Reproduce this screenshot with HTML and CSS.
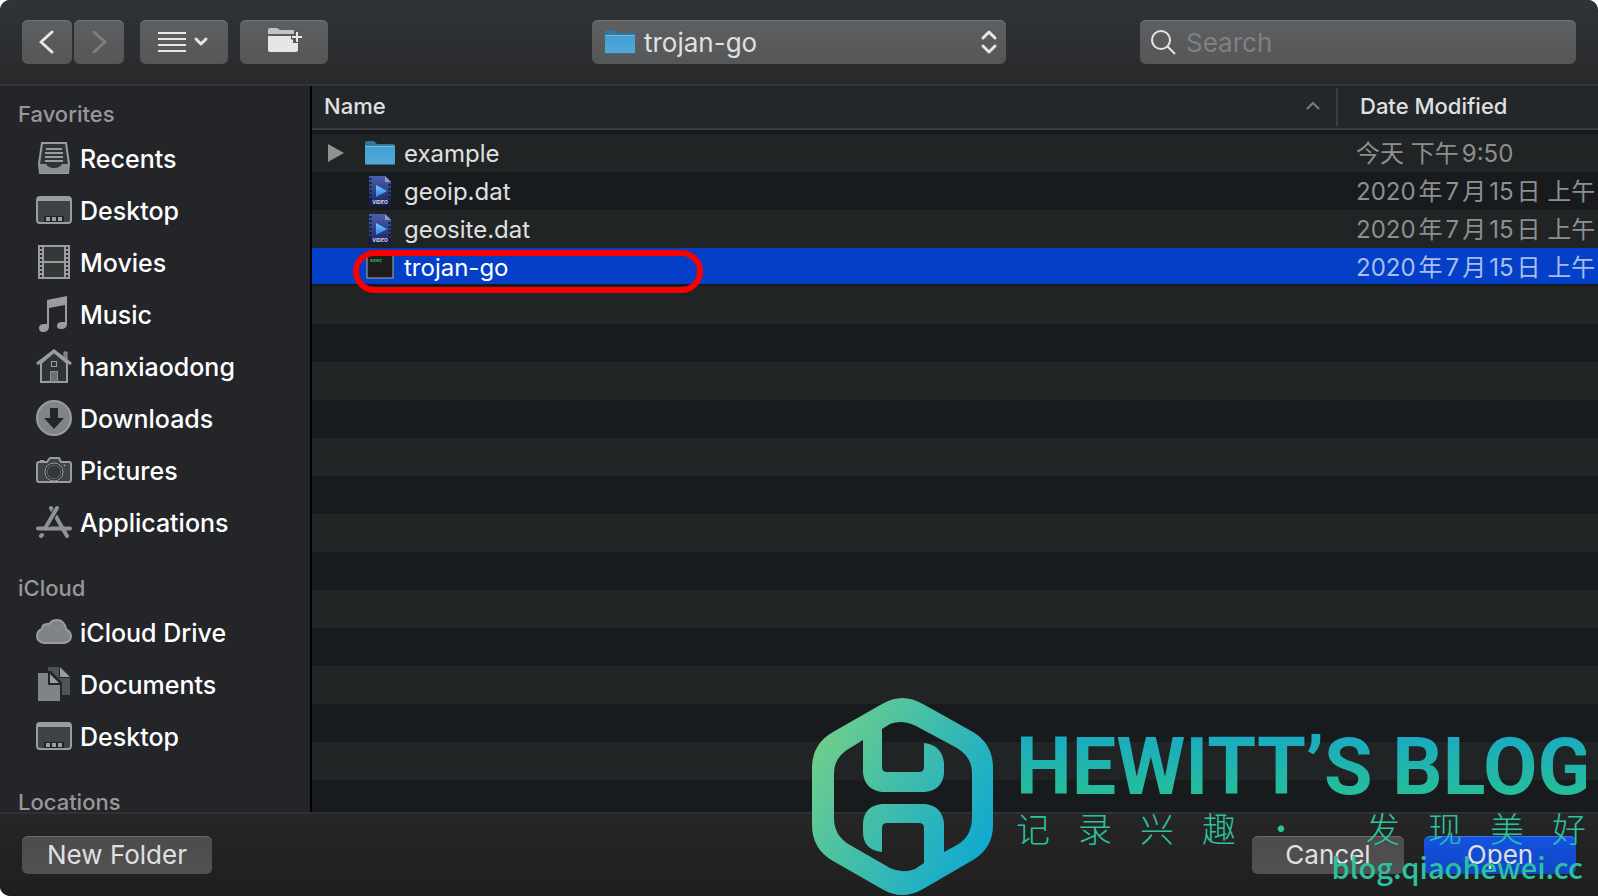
FILE: index.html
```
<!DOCTYPE html>
<html lang="en">
<head>
  <meta charset="UTF-8">
  <meta name="viewport" content="width=device-width, initial-scale=1.0">
  <title>Open</title>
  <link rel="stylesheet" href="styles.css">
</head>
<body>

  <!-- shared icons -->
  <svg class="defs" width="0" height="0" aria-hidden="true">
    <defs>
      <linearGradient id="folderFill" x1="0" y1="0" x2="0" y2="1">
        <stop offset="0" stop-color="#3f9fd3"/>
        <stop offset="1" stop-color="#55a9d6"/>
      </linearGradient>
      <linearGradient id="videoFill" x1="0" y1="0" x2="0" y2="1">
        <stop offset="0" stop-color="#4a5fb0"/>
        <stop offset="1" stop-color="#1b2358"/>
      </linearGradient>
      <linearGradient id="playFill" x1="0" y1="0" x2="0" y2="1">
        <stop offset="0" stop-color="#7cc4ff"/>
        <stop offset="1" stop-color="#2b83f2"/>
      </linearGradient>
      <linearGradient id="logoFill" gradientUnits="userSpaceOnUse" x1="0" y1="50" x2="181" y2="147">
        <stop offset="0" stop-color="#6fcf8a"/>
        <stop offset="0.5" stop-color="#3dbbae"/>
        <stop offset="1" stop-color="#0fa8d2"/>
      </linearGradient>
    </defs>
    <symbol id="folder" viewBox="0 0 30 25">
      <path d="M0 4V2Q0 0 2 0H8Q9 0 10 1L12 3H28Q30 3 30 5V10H0Z" fill="#33779d"/>
      <path d="M0 5H30V22Q30 24 28 24H2Q0 24 0 22Z" fill="url(#folderFill)"/>
      <path d="M0 5.5H30" stroke="#73bde2"/>
      <path d="M0.5 23.5H29.5" stroke="#2c6f96"/>
    </symbol>
    <symbol id="video" viewBox="0 0 24 30">
      <path d="M1 0H17L23 6V30H1Z" fill="url(#videoFill)"/>
      <path d="M17 0L23 6H17Z" fill="#8b9ad2"/>
      <path d="M2.5 2V24M21.500 8V24" stroke="#10183f" stroke-width="2" stroke-dasharray="2 2"/>
      <path d="M8 9L19 15L8 21Z" fill="url(#playFill)"/>
      <rect x="1" y="24" width="22" height="6" fill="#161d4a"/>
      <text x="12" y="28" class="video-label">VIDEO</text>
    </symbol>
    <symbol id="desktop" viewBox="0 0 36 36">
      <rect x="1" y="5" width="34" height="26" rx="3" fill="#3e4346" stroke="#9b9ca0" stroke-width="2"/>
      <path d="M1 9V7Q1 5 3 5H33Q35 5 35 7V9Z" fill="#9b9ca0"/>
      <rect x="8" y="24" width="20" height="6" fill="#222327"/>
      <path d="M10 25h4v4h-4zM16 25h4v4h-4zM22 25h4v4h-4z" fill="#9b9ca0"/>
    </symbol>
  </svg>

  <div class="dialog">
    <header class="toolbar">
      <div class="tools">
        <div class="nav-btns">
          <button type="button" class="btn-tool nav" aria-label="Back">
            <svg width="16" height="24" viewBox="0 0 16 24"><path d="M13 2L2 12L13 22" class="line"/></svg>
          </button>
          <button type="button" class="btn-tool nav" aria-label="Forward" disabled>
            <svg width="16" height="24" viewBox="0 0 16 24"><path d="M3 2L14 12L3 22" class="line"/></svg>
          </button>
        </div>
        <button type="button" class="btn-tool" aria-label="View options">
          <svg width="52" height="22" viewBox="0 0 52 22">
            <path d="M0 2H28M0 8H28M0 14H28M0 20H28" stroke="#e6e6e7" stroke-width="2"/>
            <path d="M38 8L43 13L48 8" class="line"/>
          </svg>
        </button>
        <button type="button" class="btn-tool" aria-label="Create folder">
          <svg width="36" height="30" viewBox="0 0 36 30">
            <path d="M2 7V3Q2 1 4 1H11L14 3H28V7Z" fill="#c3c4c5"/>
            <path d="M2 9H25V12H27V16H32V23Q32 25 30 25H4Q2 25 2 23Z" fill="#e6e6e7"/>
            <path d="M31 4V16M25 10H36" stroke="#57585a" stroke-width="5"/>
            <path d="M31 5V15M26 10H36" stroke="#e6e6e7" stroke-width="2"/>
          </svg>
        </button>
      </div>
      <div class="path-box">
        <svg class="path-folder" width="30" height="25"><use href="#folder"/></svg>
        <select class="path-select" aria-label="Folder">
          <option>trojan-go</option>
        </select>
        <svg class="path-arrows" width="18" height="26" viewBox="0 0 18 26">
          <path d="M3 9L9 3L15 9M3 17L9 23L15 17" class="line"/>
        </svg>
      </div>
      <div class="search-box">
        <svg class="search-icon" width="26" height="26" viewBox="0 0 26 26">
          <circle cx="11" cy="11" r="9" fill="none" stroke="#e6e6e7" stroke-width="2"/>
          <path d="M17 17L25 25" stroke="#e6e6e7" stroke-width="2"/>
        </svg>
        <input type="search" class="search-input" placeholder="Search" aria-label="Search">
      </div>
    </header>

    <div class="content">
      <nav class="sidebar">
        <h2 class="side-title">Favorites</h2>
        <ul class="side-list">
          <li><a href="#">
            <svg viewBox="0 0 36 36">
              <path d="M7 3H29L33 24V33H3V24Z" fill="#2f3437"/>
              <path d="M3 24L6 3H30L33 24L32 33H4Z" fill="none" stroke="#9b9ca0" stroke-width="2"/>
              <path d="M3 24H10Q12 28 18 28T26 24H33L32 33H4Z" fill="#8b8f92"/>
              <path d="M10 9H26M9 13H27M9 17H27M9 21H27" stroke="#9b9ca0" stroke-width="2"/>
            </svg><span>Recents</span></a></li>
          <li><a href="#"><svg><use href="#desktop"/></svg><span>Desktop</span></a></li>
          <li><a href="#">
            <svg viewBox="0 0 36 36">
              <rect x="2" y="1" width="32" height="34" fill="#9b9ca0"/>
              <path d="M8 3H28V17H8ZM8 19H28V33H8Z" fill="#343839"/>
              <path d="M5 3V34M31 3V34" stroke="#242529" stroke-width="2" stroke-dasharray="2 2"/>
            </svg><span>Movies</span></a></li>
          <li><a href="#">
            <svg viewBox="0 0 36 36">
              <path d="M11 4L31 0V28Q31 33 25 33Q21 33 21 30Q21 26 26 26H29V9L13 12V30Q13 36 7 36Q3 36 3 32Q3 28 8 28H11Z" fill="#9b9ca0"/>
            </svg><span>Music</span></a></li>
          <li><a href="#">
            <svg viewBox="0 0 36 36">
              <path d="M5 34V15L18 4L31 15V34Z" fill="#2f3437" stroke="#9b9ca0" stroke-width="2"/>
              <path d="M28 12V4H31V14" fill="#6c7073" stroke="#9b9ca0"/>
              <path d="M1 16L18 3L35 16" fill="none" stroke="#9b9ca0" stroke-width="3"/>
              <rect x="15.500" y="13.500" width="5" height="5" fill="none" stroke="#9b9ca0"/>
              <rect x="14.500" y="23.500" width="7" height="10" fill="#6c7073" stroke="#8b8f92"/>
            </svg><span>hanxiaodong</span></a></li>
          <li><a href="#">
            <svg viewBox="0 0 36 36">
              <circle cx="18" cy="18" r="17" fill="#808487" stroke="#9b9ca0" stroke-width="2"/>
              <path d="M14 8H22V18H28L18 29L8 18H14Z" fill="#242529"/>
            </svg><span>Downloads</span></a></li>
          <li><a href="#">
            <svg viewBox="0 0 36 36">
              <path d="M3 10H11L14 6H23L25 10H33Q35 10 35 12V28Q35 30 33 30H3Q1 30 1 28V12Q1 10 3 10Z" fill="#3e4346" stroke="#9b9ca0" stroke-width="2"/>
              <path d="M4 9H8" stroke="#9b9ca0" stroke-width="2"/>
              <circle cx="18" cy="20" r="9" fill="#242529" stroke="#9b9ca0"/>
              <circle cx="18" cy="20" r="7" fill="#343839" stroke="#6c7073"/>
              <circle cx="28.500" cy="13.500" r="1" fill="#9b9ca0"/>
            </svg><span>Pictures</span></a></li>
          <li><a href="#">
            <svg viewBox="0 0 36 36">
              <g fill="none" stroke="#8f9396" stroke-width="4" stroke-linecap="round">
                <path d="M15 4L31 32"/>
                <path d="M2 24.500H34"/>
                <path d="M20 6L11 22" stroke="#242529" stroke-width="6" stroke-linecap="butt"/>
                <path d="M21 4L9 24.500M6 31L5 32"/>
              </g>
            </svg><span>Applications</span></a></li>
        </ul>
        <h2 class="side-title">iCloud</h2>
        <ul class="side-list">
          <li><a href="#">
            <svg viewBox="0 0 36 36">
              <path d="M8 29Q1 28 1 22Q1 17 6 15Q6 10 11 10H13Q16 6 21 6Q28 6 30 15Q35 18 35 22Q35 28 28 29Z" fill="#808487" stroke="#9b9ca0" stroke-width="2"/>
            </svg><span>iCloud Drive</span></a></li>
          <li><a href="#">
            <svg viewBox="0 0 36 36">
              <path d="M12 1H23V12H34V29H26V16L15 5H12Z" fill="#4e5356"/>
              <path d="M24 1L34 11H24Z" fill="#9b9ca0"/>
              <path d="M2 7H12V19H24V35H2Z" fill="#808487"/>
              <path d="M14 8L23 17H14Z" fill="#9b9ca0"/>
            </svg><span>Documents</span></a></li>
          <li><a href="#"><svg><use href="#desktop"/></svg><span>Desktop</span></a></li>
        </ul>
        <h2 class="side-title">Locations</h2>
      </nav>

      <main class="file-list">
        <table class="file-table">
          <thead>
            <tr>
              <th class="col-name">
                <div class="th-inner">Name
                  <svg width="16" height="10" viewBox="0 0 16 10"><path d="M2 8L8 2L14 8" fill="none" stroke="#7b7e80" stroke-width="2"/></svg>
                </div>
              </th>
              <th class="col-date"><div class="th-inner">Date Modified</div></th>
            </tr>
          </thead>
          <tbody>
            <tr>
              <td><div class="file">
                <button type="button" class="btn-open" aria-label="Expand"></button>
                <svg width="30" height="25"><use href="#folder"/></svg><span class="file-name">example</span>
              </div></td>
              <td class="date">今天 下午9:50</td>
            </tr>
            <tr>
              <td><div class="file no-arrow">
                <svg width="30" height="30"><use href="#video"/></svg><span class="file-name">geoip.dat</span>
              </div></td>
              <td class="date">2020年7月15日 上午1</td>
            </tr>
            <tr>
              <td><div class="file no-arrow">
                <svg width="30" height="30"><use href="#video"/></svg><span class="file-name">geosite.dat</span>
              </div></td>
              <td class="date">2020年7月15日 上午1</td>
            </tr>
            <tr class="selected">
              <td><div class="file no-arrow">
                <svg width="30" height="30" viewBox="0 0 30 30">
                  <rect x="2" y="3" width="26" height="23" fill="#1d1d1e" stroke="#a9abad"/>
                  <text x="5" y="10" class="exec-label">exec</text>
                </svg><span class="file-name">trojan-go</span>
                <span class="mark"></span>
              </div></td>
              <td class="date">2020年7月15日 上午1</td>
            </tr>
          </tbody>
        </table>
      </main>
    </div>

    <footer class="bottom">
      <button type="button" class="btn btn-new">New Folder</button>
      <button type="button" class="btn">Cancel</button>
      <button type="submit" class="btn btn-primary">Open</button>
    </footer>
  </div>

  <!-- blog watermark -->
  <div class="watermark">
    <svg class="wm-logo" width="182" height="198" viewBox="0 0 182 198">
      <path fill="url(#logoFill)" fill-rule="evenodd" d="M0 70Q0 46 21 34L70 6Q90 -6 111 6L161 34Q181 46 181 70V127Q181 150 161 162L111 191Q90 203 70 191L21 163Q0 151 0 127Z
        M22 75V120Q22 138 38 147L78 170Q90 176 103 171L112 165V130Q112 125 107 125H75Q70 125 70 130V154Q51 152 51 134V125Q52 108 70 106H113Q130 108 132 125V154L145 147Q160 138 160 120V75Q160 59 145 50L104 28Q90 21 78 26L70 31V69Q70 74 75 74H107Q112 74 112 69V45Q130 47 132 65V76Q130 92 113 94H70Q53 92 51 75V42L38 50Q22 59 22 75Z"/>
    </svg>
    <div class="wm-text">
      <p class="wm-title">HEWITT’S BLOG</p>
      <p class="wm-sub">
        <span class="wm-words"><span>记</span><span>录</span><span>兴</span><span>趣</span><span>·</span></span>
        <span class="wm-words"><span>发</span><span>现</span><span>美</span><span>好</span></span>
      </p>
      <p class="wm-url">blog.qiaohewei.cc</p>
    </div>
  </div>

</body>
</html>
```
FILE: styles.css
```
/* reset */
* {
  margin: 0;
  padding: 0;
  box-sizing: border-box;
}
ul {
  list-style-type: none;
}
a {
  color: inherit;
  text-decoration: none;
}
button, input, select {
  border: 0;
  font: inherit;
  color: inherit;
}
svg {
  flex: none;
}

body {
  height: 100vh;
  overflow: hidden;
  background-color: #fff;
  font-family: Inter, "Noto Sans CJK SC", sans-serif;
  font-size: 24px;
  line-height: 30px;
  color: #e0e0e1;
}
.defs {
  position: absolute;
}
.dialog {
  display: flex;
  flex-direction: column;
  height: 100%;
  border-radius: 10px 10px 0 10px;
  overflow: hidden;
  background-color: #242529;
}
.line {
  fill: none;
  stroke: #e6e6e7;
  stroke-width: 3;
  stroke-linecap: round;
  stroke-linejoin: round;
}

/* toolbar */
.toolbar {
  display: grid;
  grid-template-columns: 1fr minmax(200px, 414px) 1fr;
  align-items: center;
  flex: none;
  height: 86px;
  padding: 0 22px;
  border-bottom: 2px solid #333437;
  background: linear-gradient(#303437, #28292b);
  font-size: 26px;
}
.btn-tool,
.path-box,
.search-box {
  height: 44px;
  border-radius: 6px;
  background: linear-gradient(#5d5f61, #555658);
  box-shadow: inset 0 1px #717375;
}
.tools {
  display: flex;
  gap: 12px;
}
.btn-tool {
  display: flex;
  align-items: center;
  justify-content: center;
  width: 88px;
}
.nav-btns {
  display: flex;
  gap: 2px;
  margin-right: 4px;
}
.btn-tool.nav {
  width: 50px;
}
.btn-tool:disabled .line {
  stroke: #7c7d7f;
}
.path-box {
  display: flex;
  align-items: center;
  position: relative;
}
.path-select {
  width: 100%;
  height: 44px;
  padding: 2px 0 0 52px;
  appearance: none;
  background: none;
}
.path-folder {
  position: absolute;
  left: 13px;
}
.path-arrows {
  position: absolute;
  right: 8px;
  pointer-events: none;
}
.search-box {
  display: flex;
  align-items: center;
  justify-self: end;
  gap: 10px;
  width: 100%;
  max-width: 436px;
  padding: 0 10px;
}
.search-input {
  width: 100%;
  height: 44px;
  outline: 0;
  background: none;
}
.search-input::placeholder {
  color: #7f8183;
}

/* sidebar */
.content {
  display: flex;
  flex: 1;
  min-height: 0;
}
.sidebar {
  flex: none;
  width: 312px;
  overflow: hidden;
  border-right: 2px solid #000;
}
.side-title {
  height: 58px;
  padding: 20px 18px 0;
  font-size: 22px;
  font-weight: 500;
  line-height: 40px;
  color: #98989b;
}
.side-title:first-child {
  height: 46px;
  padding-top: 8px;
}
.side-list a {
  display: flex;
  align-items: center;
  gap: 8px;
  height: 52px;
  padding-left: 36px;
  font-size: 25px;
  font-weight: 500;
  color: #fff;
}
.side-list span {
  padding-top: 2px;
}
.side-list svg {
  width: 36px;
  height: 36px;
}

/* file list */
.file-list {
  flex: 1;
  min-width: 0;
  overflow: hidden;
  /* striped rows go on below the last file */
  background: repeating-linear-gradient(#202424 0 38px, #181b1e 38px 76px) 0 48px;
}
.file-table {
  width: 100%;
  table-layout: fixed;
  border-spacing: 0;
}
.file-table thead {
  background-color: #23272a;
}
.file-table thead::after {
  content: '';
  display: block;
  height: 4px;
  background-color: #181b1e;
}
.file-table th {
  height: 44px;
  border-bottom: 2px solid #3a3d41;
  font-size: 22px;
  font-weight: 500;
  text-align: left;
}
.col-date {
  width: 262px;
}
.th-inner {
  display: flex;
  align-items: center;
  justify-content: space-between;
  height: 38px;
  padding: 0 15px 2px 12px;
}
.col-date .th-inner {
  padding-left: 22px;
  border-left: 2px solid #3a3d41;
}
.file-table td {
  height: 38px;
}
.file {
  display: flex;
  align-items: center;
  position: relative;
  gap: 9px;
  height: 38px;
  padding-left: 16px;
}
.file.no-arrow {
  padding-left: 53px;
}
.file-name {
  padding-top: 2px;
}
.btn-open {
  width: 16px;
  height: 18px;
  margin-right: 12px;
  background-color: #8f9192;
  clip-path: polygon(0 0, 100% 50%, 0 100%);
}
.file-table .date {
  padding: 2px 0 0 20px;
  overflow: hidden;
  white-space: nowrap;
  text-autospace: normal;
  color: #8d8f90;
}
.selected {
  background: linear-gradient(#043fc8 36px, #181b1e 36px);
  color: #fff;
}
.file-table .selected .date {
  color: #a9bdec;
}
.mark {
  position: absolute;
  top: 2px;
  left: 41px;
  width: 350px;
  height: 43px;
  border: 6px solid #fb0000;
  border-radius: 22px;
}
.video-label {
  font-size: 5px;
  font-weight: 700;
  text-anchor: middle;
  fill: #dfe3f5;
}
.exec-label {
  font-family: "Liberation Mono", monospace;
  font-size: 5px;
  font-weight: 700;
  fill: #34c749;
}

/* buttons */
.bottom {
  display: flex;
  flex: none;
  gap: 20px;
  height: 84px;
  padding: 22px 22px 0;
  border-top: 2px solid #313132;
  background: linear-gradient(#262626, #1f1f1f);
  font-size: 26px;
}
.btn {
  width: 152px;
  height: 38px;
  border-radius: 6px;
  background: linear-gradient(#4c4c4c, #515151);
  box-shadow: inset 0 1px #6b6b6b;
}
.btn-new {
  width: 190px;
  margin-right: auto;
}
.btn-primary {
  background: linear-gradient(#1353e2, #1245c5);
  box-shadow: inset 0 1px #3a74ee;
}

/* watermark */
.watermark {
  display: flex;
  position: absolute;
  right: 12px;
  bottom: 0;
  gap: 22px;
  pointer-events: none;
}
.wm-text {
  width: 570px;
  padding-top: 20px;
  color: #2bc29f;
}
.wm-title {
  height: 90px;
  padding-top: 4px;
  font-family: Roboto, sans-serif;
  font-size: 79px;
  font-weight: 700;
  line-height: 90px;
  white-space: nowrap;
  background: linear-gradient(#1aabc2 20%, #26be98 85%);
  background-clip: text;
  color: transparent;
}
.wm-sub,
.wm-words {
  display: flex;
  justify-content: space-between;
}
.wm-sub {
  font-family: "Noto Sans CJK SC", sans-serif;
  font-size: 34px;
  font-weight: 300;
  line-height: 40px;
}
.wm-words {
  gap: 28px;
}
.wm-words span {
  width: 34px;
  text-align: center;
}
.wm-url {
  padding-right: 3px;
  font-family: "Noto Sans CJK SC", sans-serif;
  font-size: 29px;
  font-weight: 500;
  line-height: 36px;
  text-align: right;
}
```
